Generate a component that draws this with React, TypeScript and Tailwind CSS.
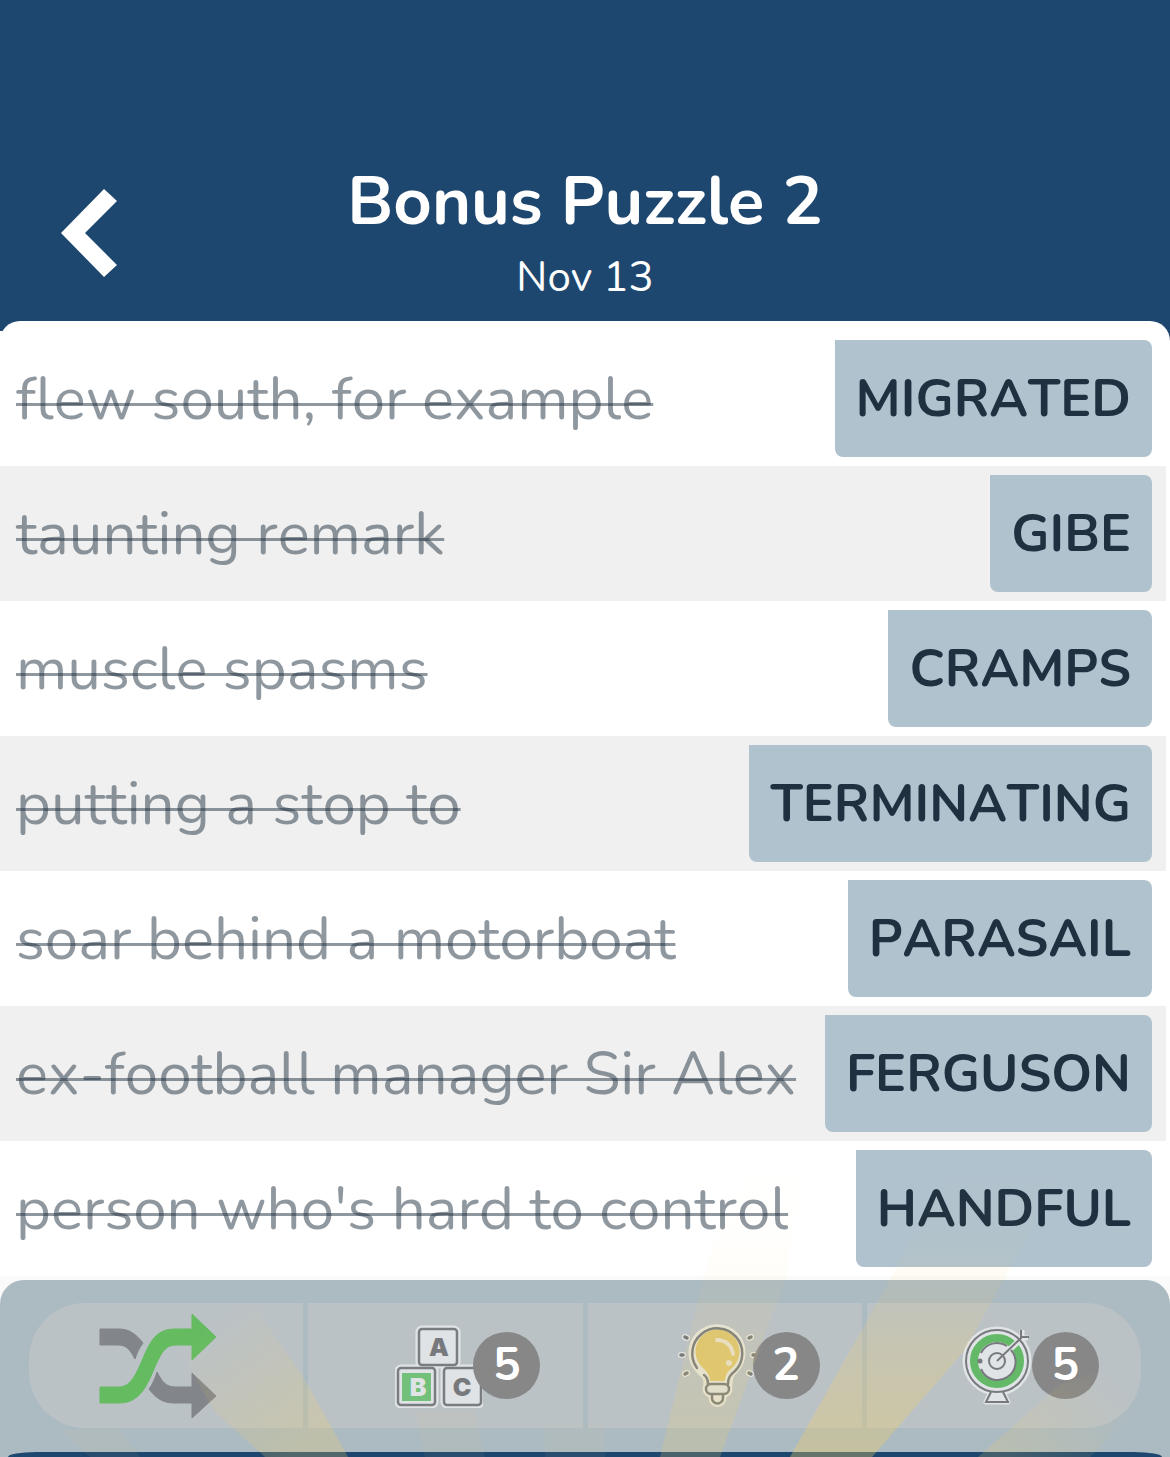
type Clue = {
  text: string
  answer: string
}

const CLUES: Clue[] = [
  { text: 'flew south, for example', answer: 'MIGRATED' },
  { text: 'taunting remark', answer: 'GIBE' },
  { text: 'muscle spasms', answer: 'CRAMPS' },
  { text: 'putting a stop to', answer: 'TERMINATING' },
  { text: 'soar behind a motorboat', answer: 'PARASAIL' },
  { text: 'ex-football manager Sir Alex', answer: 'FERGUSON' },
  { text: "person who's hard to control", answer: 'HANDFUL' },
]

function ShuffleIcon() {
  return (
    <svg viewBox="0 0 118 106" className="h-[106px] w-[118px]" aria-hidden="true">
      <g fill="#828589" stroke="#828589" strokeWidth="1" strokeLinejoin="round">
        <path d="M1 16H20C30 16 37 21 44 30C40 35 38 40 36 46C31 37 28 32 19 32H1Z" />
        <path d="M50 76C53 72 56 66 58 59C63 68 66 74 77 74H93V60L117 83L93 105V90H75C63 90 56 84 50 76Z" />
      </g>
      <path
        d="M1 74H19C29 74 34 68 42 50C51 28 57 16 76 16H93V1L117 24L93 47V32H77C66 32 62 40 55 56C46 78 38 90 20 90H1Z"
        fill="#65bb60"
        stroke="#65bb60"
        strokeLinejoin="round"
      />
    </svg>
  )
}

function BlocksIcon() {
  return (
    <svg
      viewBox="0 0 88 84"
      className="h-[84px] w-[88px] font-['Inter','Liberation_Sans',sans-serif] text-[25px] font-black"
      textAnchor="middle"
      aria-hidden="true"
    >
      <g fill="#dfe3e6" stroke="#dfe3e6" strokeWidth="7">
        <rect x="24" y="5" width="38" height="36" rx="3" />
        <rect x="3" y="44" width="37" height="37" rx="3" />
        <rect x="49" y="44" width="37" height="37" rx="3" />
      </g>
      <g fill="#dfe3e6" stroke="#7a7d80" strokeWidth="2.5">
        <rect x="24" y="5" width="38" height="36" rx="3" />
        <rect x="3" y="44" width="37" height="37" rx="3" />
        <rect x="49" y="44" width="37" height="37" rx="3" />
      </g>
      <rect x="7" y="49" width="29" height="28" fill="#73c07a" />
      <text x="44" y="32" fill="#77797c">A</text>
      <text x="23" y="72" fill="#dfe3e6">B</text>
      <text x="67" y="72" fill="#77797c">C</text>
    </svg>
  )
}

function BulbIcon() {
  return (
    <svg viewBox="0 0 88 84" className="h-[84px] w-[88px]" fill="none" strokeLinecap="round" strokeLinejoin="round" aria-hidden="true">
      <g stroke="#e4e4dc" strokeWidth="7">
        <path d="M24 46A25 25 0 1 1 60 46C55 50 54 54 54 60H32C32 55 31 52 28 50Z" fill="#e4e4dc" />
        <rect x="31" y="60" width="23" height="10" rx="5" />
        <path d="M37 70V74A5 5 0 0 0 48 74V70" fill="#e4e4dc" />
        <path d="M10 13L12 14M6 31H8M10 50L12 49M76 13L74 14M80 31H78M76 50L74 49" strokeWidth="6" />
      </g>
      <path d="M35 57C35 51 31 47 28 44A22 22 0 1 1 57 44C52 48 50 52 50 57Z" fill="#dcc572" />
      <path d="M42 16C51 16 57 22 58 30" stroke="#e6e0cc" strokeWidth="4" />
      <circle cx="54" cy="39" r="3" fill="#e6e0cc" />
      <g stroke="#777b7c" strokeWidth="2.5">
        <path d="M22 44A25 25 0 1 1 60 47C55 51 53 54 53 60M29 51C32 53 33 56 33 60" />
        <rect x="31" y="60" width="23" height="10" rx="5" fill="#dfe1dd" />
        <path d="M37 71V74A5 5 0 0 0 48 74V71" />
        <path d="M10 13L12 14M6 31H8M10 50L12 49M76 13L74 14M80 31H78M76 50L74 49" strokeWidth="3.5" />
      </g>
    </svg>
  )
}

function TargetIcon() {
  return (
    <svg viewBox="0 0 88 84" className="h-[84px] w-[88px]" fill="none" aria-hidden="true">
      <g stroke="#e0e4e6" strokeWidth="5" strokeLinejoin="round">
        <circle cx="43" cy="37" r="32" fill="#e0e4e6" />
        <path d="M37 68L32 78H54L49 68Z" fill="#e0e4e6" />
        <path d="M43 37L68 14V6M68 14H74" />
      </g>
      <circle cx="43" cy="37" r="23" stroke="#63b967" strokeWidth="8" />
      <circle cx="43" cy="37" r="18" fill="#e0e4e6" />
      <path d="M54 27L67 15" stroke="#e0e4e6" strokeWidth="6" />
      <g stroke="#77797e" strokeWidth="2">
        <circle cx="43" cy="37" r="31" />
        <path d="M27 29A18 18 0 0 1 53 22M57 26A18 18 0 1 1 27 45" />
        <circle cx="43" cy="37" r="8" />
        <path d="M43 37L67 14V6M67 13H75" />
        <path d="M37 68L32 78H54L49 68" />
      </g>
      <circle cx="26" cy="37" r="2.5" fill="#77797e" />
    </svg>
  )
}

const TOOLS = [
  { label: 'Reveal letters', icon: <BlocksIcon />, count: 5, shape: '' },
  { label: 'Hint', icon: <BulbIcon />, count: 2, shape: '' },
  { label: 'Solve word', icon: <TargetIcon />, count: 5, shape: 'rounded-r-[56px]' },
]

// Sun rays fanning up from below the toolbar
function Rays() {
  return (
    <svg
      viewBox="0 0 1170 317"
      preserveAspectRatio="none"
      className="pointer-events-none absolute inset-x-0 bottom-0 h-[317px] w-full"
      aria-hidden="true"
    >
      <defs>
        <linearGradient id="ray" gradientUnits="userSpaceOnUse" x1="0" y1="0" x2="0" y2="317">
          <stop offset="0" stopColor="#f5d060" stopOpacity="0" />
          <stop offset="0.3" stopColor="#f5d060" stopOpacity="0.02" />
          <stop offset="0.45" stopColor="#f5d060" stopOpacity="0.08" />
          <stop offset="0.75" stopColor="#f5d060" stopOpacity="0.25" />
          <stop offset="1" stopColor="#f5d060" stopOpacity="0.34" />
        </linearGradient>
        <linearGradient id="rayLeft" gradientUnits="userSpaceOnUse" x1="200" y1="190" x2="290" y2="317">
          <stop offset="0" stopColor="#f5d060" stopOpacity="0" />
          <stop offset="0.4" stopColor="#f5d060" stopOpacity="0.1" />
          <stop offset="1" stopColor="#f5d060" stopOpacity="0.24" />
        </linearGradient>
        <linearGradient id="rayRight" gradientUnits="userSpaceOnUse" x1="1110" y1="230" x2="1000" y2="317">
          <stop offset="0" stopColor="#f5d060" stopOpacity="0" />
          <stop offset="1" stopColor="#f5d060" stopOpacity="0.18" />
        </linearGradient>
      </defs>
      <path d="M150 160L250 160L305 240L348 317H265L215 272Z" fill="url(#rayLeft)" />
      <path d="M810 0L785 140L720 317H660L708 120L760 0Z" fill="url(#ray)" opacity="0.6" />
      <path d="M960 0L1080 0L965 210L872 317H790L890 140Z" fill="url(#ray)" />
      <path d="M1060 245L1130 220L1160 250L1090 317H978Z" fill="url(#rayRight)" />
      <path d="M60 290L120 290L140 317H90Z" fill="url(#ray)" opacity="0.15" />
      <path d="M415 270L475 270L485 317H425Z" fill="url(#ray)" opacity="0.15" />
      <path d="M545 285H605V317H545Z" fill="url(#ray)" opacity="0.15" />
    </svg>
  )
}

export default function App() {
  return (
    <div className="relative flex min-h-screen flex-col bg-[#1e476f] font-['Nunito','Lato',sans-serif] [font-kerning:none]">
      <header className="relative px-10 pt-[160px] pb-[10px] text-center text-white">
        <button type="button" aria-label="Back" className="absolute top-[189px] left-[60px]">
          <svg viewBox="0 0 58 88" className="h-[88px] w-[58px]" fill="currentColor">
            <path d="M1 44L44 0L57 12L25 44L57 76L44 88Z" />
          </svg>
        </button>
        <h1 className="text-[67px] leading-[84px] font-bold">Bonus Puzzle 2</h1>
        <p className="text-[42px] leading-[67px]">Nov 13</p>
      </header>

      <main className="rounded-t-[20px] bg-white pt-[10px]">
        <ul className="mr-1">
          {CLUES.map((clue) => (
            <li
              key={clue.answer}
              className="flex h-[135px] items-center justify-between bg-white pr-[14px] pl-4 even:bg-[#f0f0f0]"
            >
              {/* underline raised into the letters, lower than a plain line-through */}
              <s className="text-[60px] leading-[80px] whitespace-nowrap text-[#1f3040]/50 underline decoration-[3px] underline-offset-[-16px] [text-decoration-skip-ink:none]">
                {clue.text}
              </s>
              <span className="rounded-lg rounded-tl-none bg-[#b0c2ce] px-[21px] text-[52px] leading-[117px] font-bold text-[#1f3040]">
                {clue.answer}
              </span>
            </li>
          ))}
        </ul>
        <div className="h-1 bg-[#fafafa]" />
      </main>

      <footer className="bg-[#fafafa]">
        <div className="rounded-t-[24px] bg-[#acbac2]">
          <div className="grid grid-cols-4 gap-[5px] px-[29px] pt-[23px] pb-6">
            <button
              type="button"
              aria-label="Shuffle"
              className="flex h-[125px] items-center justify-center rounded-l-[56px] bg-[#bbc2c6] pr-4"
            >
              <ShuffleIcon />
            </button>
            {TOOLS.map((tool) => (
              <button
                key={tool.label}
                type="button"
                aria-label={`${tool.label}, ${tool.count} left`}
                className={`flex h-[125px] items-center justify-center bg-[#bbc2c6] pr-3 ${tool.shape}`}
              >
                <span className="relative">
                  {tool.icon}
                  <span className="absolute top-2 left-[78px] size-[67px] rounded-full bg-[#878787] text-center text-[46px] leading-[65px] font-bold text-white">
                    {tool.count}
                  </span>
                </span>
              </button>
            ))}
          </div>
          <div className="mx-2 h-[5px] bg-[#1e476f] [border-radius:28px_28px_0_0/5px_5px_0_0]" />
        </div>
      </footer>
      <Rays />
    </div>
  )
}
